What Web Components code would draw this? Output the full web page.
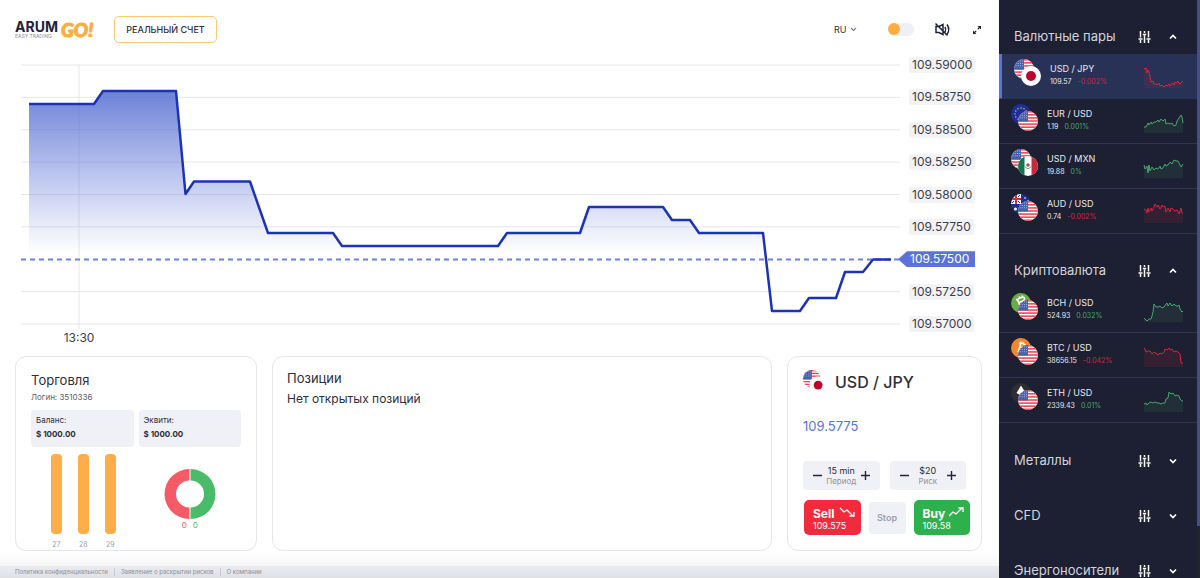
<!DOCTYPE html>
<html lang="ru">
  <head>
    <meta charset="UTF-8" />
    <meta name="viewport" content="width=device-width, initial-scale=1.0" />
    <title>ARUM GO!</title>
    <style>
      body {
        margin: 0;
        font-family: Inter, "Open Sans", sans-serif;
        color: #2c2e3a;
        background: #fff;
      }
    </style>
  </head>
  <body>
    <trade-app></trade-app>

    <script>
      // Общие стили для всех компонентов
      const base = `
        * { box-sizing: border-box; }
        button, select { font: inherit; color: inherit; border: 0; background: none; padding: 0; margin: 0; cursor: pointer; }
        svg { display: block; overflow: visible; }
        p, h2, h3 { margin: 0; font-weight: 400; }
      `;

      const define = (name, render) => {
        customElements.define(
          name,
          class extends HTMLElement {
            constructor() {
              super();
              this.attachShadow({ mode: "open" });
            }
            connectedCallback() {
              this.shadowRoot.innerHTML = render(this);
            }
          }
        );
      };

      // Флаги и монеты, круг 20x20
      const stripes = [0, 1, 2, 3, 4, 5, 6]
        .map((i) => `<rect y="${i * 3.08}" width="20" height="1.54" fill="#ee4150"/>`)
        .join("");
      const dots = [2, 4.4, 6.8]
        .map((y) => [2, 4.2, 6.4, 8.6].map((x) => `<circle cx="${x}" cy="${y}" r=".5"/>`).join(""))
        .join("");
      const euStars = Array.from({ length: 12 }, (_, i) => {
        const a = (i * Math.PI) / 6;
        return `<circle cx="${10 + 6 * Math.cos(a)}" cy="${10 + 6 * Math.sin(a)}" r=".7"/>`;
      }).join("");
      const icons = {
        usd: `<rect width="20" height="20" fill="#fff"/>${stripes}<rect width="10" height="10.4" fill="#4560ae"/><g fill="#c9d2ee">${dots}</g>`,
        jpy: `<rect width="20" height="20" fill="#fff"/><circle cx="10" cy="10" r="5" fill="#b8082f"/>`,
        eur: `<rect width="20" height="20" fill="#1b2f9c"/><g fill="#e8cf58">${euStars}</g>`,
        mxn: `<rect width="20" height="20" fill="#fff"/><rect width="6.5" height="20" fill="#12744f"/><rect x="13.5" width="6.5" height="20" fill="#c72a3c"/><circle cx="10" cy="9" r="1.8" fill="#8c6239"/><path d="M7.3 10.5a2.8 2.8 0 0 0 5.4 0" fill="none" stroke="#6f9a6a"/>`,
        aud: `<rect width="20" height="20" fill="#1c3190"/><rect width="10" height="10" fill="#fff"/><path d="M0 5h10M5 0v10" stroke="#d9283d" stroke-width="2"/><path d="M1 1l2 2M9 1L7 3M1 9l2-2M9 9L7 7" stroke="#1c3190"/><g fill="#fff"><circle cx="4.5" cy="15" r="1.5"/><circle cx="14" cy="4" r=".8"/><circle cx="17" cy="7" r=".8"/></g>`,
        bch: `<rect width="20" height="20" fill="#67ad45"/><path d="M5 7l5-2.500q3-1 3.500.8t-2 2.700q3-.4 3 1.600t-4 3M6.500 6.500L9 13M8 9.500l4-1.500M8 3.500l1 2M11 2.500l.5 2" fill="none" stroke="#fff" stroke-width="1.500"/>`,
        btc: `<rect width="20" height="20" fill="#f3862c"/><path d="M8 5l4 .8q3 .8 2.300 2.700t-3.300 1q2.500.8 2 2.800t-4 1.700l-3-.7M9.500 5.500L7.500 14M8.500 9l3 .7M10 3.500l-.5 2M12.500 4l-.5 2" fill="none" stroke="#fff" stroke-width="1.500"/>`,
        eth: `<rect width="20" height="20" fill="#2d2e31"/><path d="M10 2.500l4.500 7.500-4.500 2.500L5.500 10z" fill="#fff"/>`,
      };

      define("flag-pair", (el) => {
        const [back, front] = el.getAttribute("pair").split("-");
        return `
          <style>${base}
            :host { display: block; flex: none; width: 27px; height: 27px; }
            svg { width: 100%; height: 100%; }
          </style>
          <svg viewBox="0 0 27 27">
            <clipPath id="c"><circle cx="10" cy="10" r="10"/></clipPath>
            <g clip-path="url(#c)">${icons[back]}</g>
            <g transform="translate(7 7)"><g clip-path="url(#c)">${icons[front]}</g></g>
          </svg>`;
      });

      define("spark-line", (el) => {
        const pts = el.getAttribute("points");
        const color = el.getAttribute("color");
        return `
          <style>${base}
            :host { display: block; flex: none; width: 39px; height: 22px; }
          </style>
          <svg width="39" height="22" viewBox="0 0 39 22">
            <polygon points="0,22 ${pts} 39,22" fill="${color}" opacity=".12"/>
            <polyline points="${pts}" fill="none" stroke="${color}" stroke-linejoin="round"/>
          </svg>`;
      });

      define("pair-row", (el) => {
        const delta = el.getAttribute("delta");
        const color = delta.startsWith("-") ? "#d3263c" : "#46a868";
        return `
          <style>${base}
            :host { display: flex; height: 45px; padding: 5px 14px 0 12px; border-bottom: 1px solid #33364a; }
            :host([active]) { background: #283156; border-left: 3px solid #5b72d8; border-bottom-color: #283156; }
            .text { flex: 1; padding: 4px 0 0 9px; color: #e8e9ee; }
            h3 { font-size: 9px; line-height: 12px; }
            p { font-size: 7px; line-height: 14px; }
            .delta { color: ${color}; margin-left: 4px; }
            spark-line { margin-top: 7px; }
          </style>
          <flag-pair pair="${el.getAttribute("pair")}"></flag-pair>
          <div class="text">
            <h3>${el.getAttribute("name")}</h3>
            <p>${el.getAttribute("price")} <span class="delta">${delta}</span></p>
          </div>
          <spark-line color="${color}" points="${el.getAttribute("points")}"></spark-line>`;
      });

      define("pair-section", (el) => `
        <style>${base}
          :host { display: block; }
          header { display: flex; align-items: center; height: 54px; padding: 18px 20px 0 15px; color: #fff; }
          :host([closed]) header { height: 55px; }
          h2 { flex: 1; font-size: 13px; line-height: 16px; color: #d3d4dc; }
          button { display: block; padding-top: 2px; }
          button + button { margin-left: 18px; }
          :host([closed]) .toggle svg { transform: rotate(180deg); }
        </style>
        <header>
          <h2>${el.getAttribute("heading")}</h2>
          <button aria-label="Фильтр">
            <svg width="13" height="12" viewBox="0 0 13 12" fill="none" stroke="#fff" stroke-width="1.500">
              <path d="M2.500 0v6.500M2.500 9v3M6.500 0v2M6.500 4.500V12M10.500 0v6.500M10.500 9v3M.5 8h4M4.800 3.500h3.400M8.500 8h4"/>
            </svg>
          </button>
          <button class="toggle" aria-label="Свернуть">
            <svg width="8" height="6" viewBox="0 0 8 6" fill="none" stroke="#fff" stroke-width="1.700"><path d="M1 4.500l3-3 3 3"/></svg>
          </button>
        </header>
        <slot></slot>`);

      define("side-bar", () => `
        <style>${base}
          :host { display: flex; overflow: hidden; background: #1d1f32; }
          .list { flex: 1; min-width: 0; }
          .scroll { flex: none; width: 3px; padding-top: 0; background: #22232f; }
          .thumb { height: 91%; background: #474d86; }
        </style>
        <div class="list"><slot></slot></div>
        <div class="scroll"><div class="thumb"></div></div>`);

      define("top-bar", () => `
        <style>${base}
          :host { display: flex; align-items: center; height: 59px; padding: 0 18px 0 15px; }
          .logo { display: grid; grid-template-columns: auto auto; column-gap: 3px; align-items: center; text-decoration: none; color: #22243a; }
          .name { font-size: 14px; line-height: 12px; font-weight: 700; }
          .tag { font-size: 5px; line-height: 4px; color: #8b8d98; }
          .go { grid-row: 1 / 3; grid-column: 2; font: italic 900 19px/18px Lato, sans-serif; color: #fbad42; -webkit-text-stroke: 1px #fbad42; }
          .account { height: 27px; margin-left: 21px; padding: 0 11px; border: 1px solid #fcc777; border-radius: 5px; font-size: 9px; font-weight: 500; }
          .lang { display: flex; align-items: center; margin-left: auto; margin-right: 31px; }
          select { appearance: none; width: 16px; font-size: 9px; }
          input { appearance: none; display: flex; width: 26px; height: 13px; margin: 0 21px 0 0; border-radius: 7px; background: #eff0f5; }
          input::before { content: ""; width: 12px; height: 12px; border-radius: 50%; background: #fbad42; }
          .sound { margin-right: 23px; }
        </style>
        <a class="logo" href="#">
          <span class="name">ARUM</span>
          <span class="go">GO!</span>
          <span class="tag">EASY TRADING</span>
        </a>
        <button class="account">РЕАЛЬНЫЙ СЧЕТ</button>
        <label class="lang">
          <select aria-label="Язык"><option>RU</option></select>
          <svg width="7" height="5" viewBox="0 0 7 5" fill="none" stroke="#7c7f95" stroke-width="1.200"><path d="M1 1l2.500 2.500L6 1"/></svg>
        </label>
        <input type="checkbox" aria-label="Тёмная тема" />
        <button class="sound" aria-label="Звук">
          <svg width="15" height="13" viewBox="0 0 15 13" fill="none" stroke="#22243a" stroke-width="1.500">
            <path d="M1 3.500h3l4-2v10l-4-2H1zM.5 .5l12 12M10 4q1.500 2.500 0 5M12 1.500q3.500 5 0 10"/>
          </svg>
        </button>
        <button aria-label="На весь экран">
          <svg width="8" height="8" viewBox="0 0 8 8" fill="#22243a">
            <path d="M4.500 0H8v3.500zM0 4.500V8h3.500z"/><path d="M4.800 3.200L7 1M3.200 4.800L1 7" stroke="#22243a" stroke-width="1.200"/>
          </svg>
        </button>`);

      const prices = ["109.59000", "109.58750", "109.58500", "109.58250", "109.58000", "109.57750", "109.57500", "109.57250", "109.57000"];
      const current = "109.57500";
      const line = "8,39 73,39 82,26 155,26 164.500,129 173,116.500 229,116.500 247,168 312,168 321,181 477,181 486,168 559,168 568,142 642,142 651,155 669,155 678,168 742,168 751,246 779,246 788,233 815,233 824,207 842,207 852,194.500 870,194.500";

      define("price-chart", () => `
        <style>${base}
          :host { display: grid; grid-template: 1fr 32px / 1fr 76px; padding: 6px 23px 0 21px; }
          .plot { min-height: 0; }
          .plot svg { width: 100%; height: 100%; }
          .plot svg * { vector-effect: non-scaling-stroke; }
          .axis { display: flex; flex-direction: column; justify-content: space-between; align-items: flex-start; margin: -8px 0; padding-left: 9px; }
          .axis span { padding: 0 3px; border-radius: 2px; background: #f2f3f7; font-size: 12px; line-height: 16px; color: #3c3e49; }
          .axis .now { margin-left: -11px; padding: 0 6px 0 12px; border-radius: 0; color: #fff; background: #5b72d8; clip-path: polygon(0 50%, 9px 0, 100% 0, 100% 100%, 9px 100%); }
          .time { display: grid; grid-template-columns: 58fr 821fr; font-size: 12px; line-height: 27px; color: #3c3e49; }
          .time span { justify-self: end; width: 0; display: flex; justify-content: center; }
        </style>
        <div class="plot">
          <svg viewBox="0 0 879 259" preserveAspectRatio="none">
            <linearGradient id="g" x1="0" y1="26" x2="0" y2="188" gradientUnits="userSpaceOnUse">
              <stop offset="0" stop-color="#4c66d0" stop-opacity=".82"/>
              <stop offset="1" stop-color="#5b72d8" stop-opacity="0"/>
            </linearGradient>
            <g stroke="#e6e6e9">
              ${prices.map((p, i) => (p === current ? "" : `<path d="M0 ${i * 32.375}H879"/>`)).join("")}
              <path d="M58 0V265"/>
            </g>
            <polygon points="8,188 8,39 73,39 82,26 155,26 164.500,129 173,116.500 229,116.500 247,168 312,168 321,181 477,181 486,168 559,168 568,142 642,142 651,155 669,155 678,168 742,168 744,188" fill="url(#g)"/>
            <path d="M0 194.500H879" stroke="#6d82df" stroke-width="2" stroke-dasharray="5 4"/>
            <polyline points="${line}" fill="none" stroke="#1c33b5" stroke-width="2.500" stroke-linejoin="round"/>
          </svg>
        </div>
        <div class="axis">
          ${prices.map((p) => `<span${p === current ? ' class="now"' : ""}>${p}</span>`).join("")}
        </div>
        <div class="time"><span>13:30</span></div>`);

      define("app-card", () => `
        <style>${base}
          :host { display: block; border: 1px solid #e5e6ea; border-radius: 11px; background: #fff; overflow: hidden; }
        </style>
        <slot></slot>`);

      define("account-panel", () => `
        <style>${base}
          :host { display: block; padding: 14px 15px 0; }
          h2 { font-size: 13px; line-height: 18px; }
          .login { font-size: 8px; line-height: 16px; color: #5b5d68; }
          .cols { display: grid; grid-template-columns: 1fr 1fr; gap: 5px; }
          .box { height: 37px; margin-top: 5px; padding: 3px 5px; border-radius: 4px; background: #f0f1f6; font-size: 8px; line-height: 14px; }
          .box b { display: block; font-weight: 700; }
          .bars { display: flex; justify-content: center; gap: 16px; padding: 2px 0 0 2px; }
          .bars div { width: 11px; text-align: center; font-size: 7px; line-height: 10px; color: #9b9ea9; }
          .bars div::before { content: ""; display: block; height: 80px; margin-bottom: 6px; border-radius: 4px; background: #fdae4a; }
          .donut { display: flex; flex-direction: column; align-items: center; padding-top: 17px; }
          .nums { display: flex; gap: 6px; font-size: 8px; line-height: 12px; color: #f55b66; }
          .nums span + span { color: #4abc69; }
        </style>
        <h2>Торговля</h2>
        <p class="login">Логин: 3510336</p>
        <div class="cols">
          <div class="box">Баланс:<b>$ 1000.00</b></div>
          <div class="box">Эквити:<b>$ 1000.00</b></div>
          <div class="bars"><div>27</div><div>28</div><div>29</div></div>
          <div class="donut">
            <svg width="50" height="50" viewBox="0 0 50 50">
              <path d="M24.500 0A25 25 0 0 0 24.500 50V38.500A13.500 13.500 0 0 1 24.500 11.500z" fill="#f55b66"/>
              <path d="M25.500 0A25 25 0 0 1 25.500 50V38.500A13.500 13.500 0 0 0 25.500 11.500z" fill="#4abc69"/>
            </svg>
            <div class="nums"><span>0</span><span>0</span></div>
          </div>
        </div>`);

      define("positions-panel", () => `
        <style>${base}
          :host { display: block; padding: 11px 14px; font-size: 12px; line-height: 21px; }
          h2 { font-size: 13px; line-height: 20px; }
        </style>
        <h2>Позиции</h2>
        <p>Нет открытых позиций</p>`);

      define("value-stepper", (el) => `
        <style>${base}
          :host { display: flex; flex: 1; align-items: center; justify-content: space-between; height: 29px; padding: 0 10px; border-radius: 4px; background: #f0f1f6; }
          .value { text-align: center; font-size: 9px; line-height: 10px; }
          small { display: block; font-size: 8px; line-height: 10px; color: #8f929c; }
        </style>
        <button aria-label="Меньше"><svg width="9" height="9" stroke="#22243a" stroke-width="1.400"><path d="M0 4.500h9"/></svg></button>
        <div class="value"><output>${el.getAttribute("value")}</output><small>${el.getAttribute("label")}</small></div>
        <button aria-label="Больше"><svg width="9" height="9" stroke="#22243a" stroke-width="1.400"><path d="M0 4.500h9M4.500 0v9"/></svg></button>`);

      define("order-panel", () => `
        <style>${base}
          :host { display: block; padding: 13px 15px 0; }
          header { display: flex; align-items: center; gap: 8px; height: 24px; }
          flag-pair { width: 24px; height: 24px; }
          h2 { font-size: 16px; font-weight: 500; }
          .price { margin-top: 23px; font-size: 13px; line-height: 18px; color: #5b72d8; }
          .steppers { display: flex; gap: 10px; margin-top: 26px; }
          .actions { display: flex; align-items: center; gap: 8px; margin: 10px -4px 0 1px; }
          .deal { flex: 1; height: 35px; padding: 2px 6px 0 9px; border-radius: 5px; background: #f02b3c; color: #fff; text-align: left; font-size: 9px; line-height: 11px; }
          .buy { background: #2db14c; }
          .deal span { display: flex; justify-content: space-between; font-size: 12px; line-height: 13px; font-weight: 700; }
          .stop { width: 37px; height: 32px; border-radius: 4px; background: #f0f1f6; color: #9b9ea9; font-size: 9px; font-weight: 600; }
        </style>
        <header><flag-pair pair="usd-jpy"></flag-pair><h2>USD / JPY</h2></header>
        <p class="price">109.5775</p>
        <div class="steppers">
          <value-stepper value="15 min" label="Период"></value-stepper>
          <value-stepper value="$20" label="Риск"></value-stepper>
        </div>
        <div class="actions">
          <button class="deal">
            <span>Sell <svg width="16" height="11" fill="none" stroke="#fff" stroke-width="1.300"><path d="M1 1l4 4 3-2 6 6M10.500 9H15V5"/></svg></span>
            109.575
          </button>
          <button class="stop">Stop</button>
          <button class="deal buy">
            <span>Buy <svg width="16" height="11" fill="none" stroke="#fff" stroke-width="1.300"><path d="M1 9l4-4 3 2 6-6M10.500 1H15v4"/></svg></span>
            109.58
          </button>
        </div>`);

      define("page-footer", () => `
        <style>${base}
          :host { display: block; padding-top: 15px; background: linear-gradient(#fff, #f6f6f7 15px); }
          nav { display: flex; align-items: center; height: 12px; padding-left: 15px; background: linear-gradient(#e9ebf0, #dfe1e5); font-size: 6px; }
          a { color: #8c8e98; text-decoration: none; line-height: 8px; }
          a + a { margin-left: 6px; padding-left: 6px; border-left: 1px solid #c8cad0; }
        </style>
        <nav>
          <a href="#">Политика конфиденциальности</a>
          <a href="#">Заявление о раскрытии рисков</a>
          <a href="#">О компании</a>
        </nav>`);

      define("trade-app", () => `
        <style>${base}
          :host { display: grid; grid-template-columns: 1fr 201px; height: 100vh; overflow: hidden; }
          main { display: flex; flex-direction: column; min-width: 0; }
          price-chart { flex: 1; min-height: 0; }
          .cards { display: grid; grid-template-columns: 242px 1fr 195px; gap: 15px; padding: 0 17px 0 15px; }
        </style>
        <main>
          <top-bar></top-bar>
          <price-chart></price-chart>
          <div class="cards">
            <app-card><account-panel></account-panel></app-card>
            <app-card><positions-panel></positions-panel></app-card>
            <app-card><order-panel></order-panel></app-card>
          </div>
          <page-footer></page-footer>
        </main>
        <side-bar>
          <pair-section heading="Валютные пары">
            <pair-row active pair="usd-jpy" name="USD / JPY" price="109.57" delta="-0.002%" points="0,2 1,3 2,2 3,7 4,4 5,5 6,11 7,16 9,15 10,18 12,18 13,19 15,17 16,20 18,19 20,21 22,19 23,20 25,18 26,20 28,17 30,19 31,16 32,17 34,15 35,18 37,17 39,15"></pair-row>
            <pair-row pair="eur-usd" name="EUR / USD" price="1.19" delta="0.001%" points="0,16 2,16 4,12 5,14 7,11 8,13 10,11 12,11 14,9 15,11 17,8 19,10 21,8 22,13 24,12 26,13 28,12 30,15 32,14 33,10 35,7 37,4 38,6 39,12"></pair-row>
            <pair-row pair="usd-mxn" name="USD / MXN" price="19.88" delta="0%" points="0,9 1,13 3,10 4,17 5,9 6,15 8,11 10,14 12,12 14,13 16,10 17,13 19,12 21,8 22,10 24,9 26,6 28,8 30,4 32,5 34,5 36,9 37,11 39,8"></pair-row>
            <pair-row pair="aud-usd" name="AUD / USD" price="0.74" delta="-0.002%" points="0,8 2,9 3,12 4,7 5,11 7,7 8,10 10,6 11,3 13,6 14,4 16,8 18,4 19,6 21,5 22,11 24,7 26,11 27,7 29,8 31,10 33,9 35,13 37,7 38,12 39,12"></pair-row>
          </pair-section>
          <pair-section heading="Криптовалюта">
            <pair-row pair="bch-usd" name="BCH / USD" price="524.93" delta="0.032%" points="0,18 2,20 3,21 5,19 7,19 8,16 9,12 10,4 12,7 14,7 16,6 18,8 20,7 22,4 23,3 24,6 26,3 28,6 30,4 32,6 34,6 35,5 36,9 38,12 39,11"></pair-row>
            <pair-row pair="btc-usd" name="BTC / USD" price="38656.15" delta="-0.042%" points="0,3 1,4 2,7 4,6 6,6 8,9 10,7 12,8 14,10 16,8 18,9 20,7 21,4 23,5 25,3 26,5 28,4 30,7 32,6 34,7 36,9 37,18 39,18"></pair-row>
            <pair-row pair="eth-usd" name="ETH / USD" price="2339.43" delta="0.01%" points="0,14 2,13 3,15 5,13 7,12 9,13 11,12 13,13 15,13 17,14 19,13 21,13 22,9 24,8 25,2 27,4 29,3 31,6 33,5 35,6 36,9 38,11 39,11"></pair-row>
          </pair-section>
          <pair-section closed heading="Металлы"></pair-section>
          <pair-section closed heading="CFD"></pair-section>
          <pair-section closed heading="Энергоносители"></pair-section>
        </side-bar>`);
    </script>
  </body>
</html>
